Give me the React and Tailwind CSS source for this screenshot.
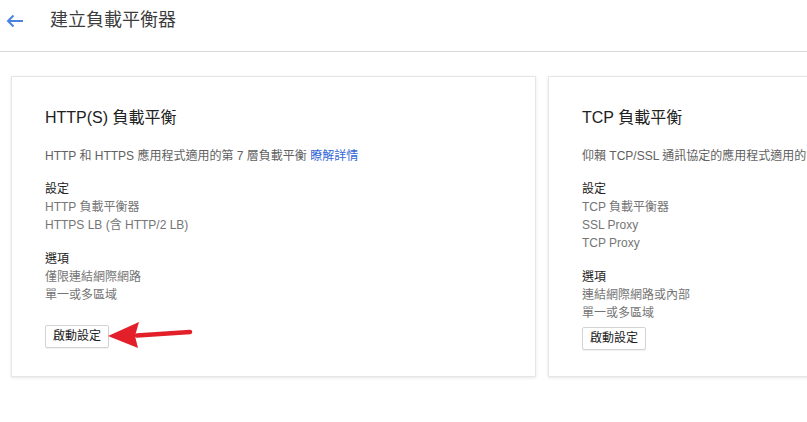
const FONT = { fontFamily: '"Liberation Sans", "Noto Sans CJK TC", sans-serif' };

const cards = [
    {
        title: 'HTTP(S) 負載平衡',
        desc: 'HTTP 和 HTTPS 應用程式適用的第 7 層負載平衡',
        link: '瞭解詳情',
        settings: ['HTTP 負載平衡器', 'HTTPS LB (含 HTTP/2 LB)'],
        options: ['僅限連結網際網路', '單一或多區域'],
    },
    {
        title: 'TCP 負載平衡',
        desc: '仰賴 TCP/SSL 通訊協定的應用程式適用的第 4 層負載平衡',
        settings: ['TCP 負載平衡器', 'SSL Proxy', 'TCP Proxy'],
        options: ['連結網際網路或內部', '單一或多區域'],
    },
];

const Section = ({ label, items }) => (
    <div className="text-[12px] leading-[18px]">
        <div className="text-[#212121]">{label}</div>
        {items.map(it => (
            <div key={it} className="text-[#757575] whitespace-nowrap">{it}</div>
        ))}
    </div>
);

const Card = ({ c }) => (
    <div className="shrink-0 w-[525px] h-[301px] flex flex-col bg-white border border-[#e6e6e6] shadow-[0_1px_3px_rgba(0,0,0,0.10)] pt-[29px] px-[33px] pb-[28px]">
        <div className="text-[16px] leading-[24px] text-[#212121]">{c.title}</div>
        <div className="mt-[17px] text-[12px] leading-[18px] text-[#616161] whitespace-nowrap">
            {c.desc}
            {c.link && <span className="text-[#3367d6]"> {c.link}</span>}
        </div>
        <div className="mt-[15px] flex flex-col gap-[16px]">
            <Section label="設定" items={c.settings} />
            <Section label="選項" items={c.options} />
        </div>
        <div className="mt-auto pt-[3px]">
            <button className="h-[23px] px-[7px] text-[12px] leading-[21px] text-[#212121] bg-white border border-[#d3d3d3] rounded-[2px] shadow-[0_1px_1px_rgba(0,0,0,0.06)]">
                啟動設定
            </button>
        </div>
    </div>
);

export default function App() {
    return (
        <div className="relative w-[807px] h-[422px] overflow-hidden bg-white" style={FONT}>
            <div className="h-[52px] flex items-start pt-[8px] border-b border-[#dadada]">
                <svg width="18" height="14" viewBox="0 0 18 14" className="ml-[6px] mt-[6px]">
                    <path d="M17 7H2M7.5 1.5L2 7l5.5 5.5" fill="none" stroke="#4a84e0" strokeWidth="2" />
                </svg>
                <div className="ml-[26px] text-[18px] leading-[24px] text-[#3c3c3c]">建立負載平衡器</div>
            </div>
            <div className="flex gap-[12px] pl-[11px] pt-[24px]">
                {cards.map(c => <Card key={c.title} c={c} />)}
            </div>
            <svg className="absolute left-0 top-0" width="807" height="422" viewBox="0 0 807 422">
                <path d="M137 335.5 L190 332" stroke="#e3202a" strokeWidth="4.5" strokeLinecap="round" />
                <path d="M108 336 L139 322 L135 336 L138 348 Z" fill="#e3202a" />
            </svg>
        </div>
    );
}
